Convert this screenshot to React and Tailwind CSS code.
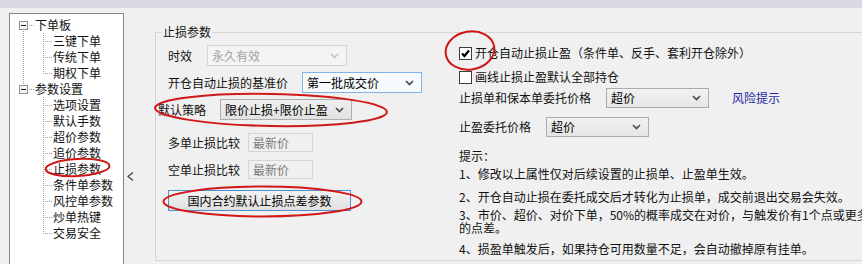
import React from 'react';

function Chevron({ color = '#4a4a4a' }) {
  return (
    <svg width="9" height="6" viewBox="0 0 9 6" className="shrink-0">
      <polyline points="1,1 4.5,4.5 8,1" fill="none" stroke={color} strokeWidth="1.7" />
    </svg>
  );
}

function Select({ text, className, textClass, chevronColor }) {
  return (
    <div className={`flex items-center justify-between pl-[4px] pr-[7px] border h-full shrink-0 ${className}`}>
      <span className={`leading-[16px] whitespace-nowrap ${textClass}`}>{text}</span>
      <Chevron color={chevronColor} />
    </div>
  );
}

const DOT = '#a0a0a0';

function TopCell({ hasPrev, hasNext }) {
  return (
    <svg width="21" height="16" className="shrink-0" shapeRendering="crispEdges">
      {hasPrev && <line x1="9.5" y1="0" x2="9.5" y2="4" stroke={DOT} strokeDasharray="1 1" />}
      {hasNext && <line x1="9.5" y1="14" x2="9.5" y2="16" stroke={DOT} strokeDasharray="1 1" />}
      <rect x="5.5" y="4.5" width="8" height="8" fill="#f4f4f4" stroke="#919191" />
      <line x1="7" y1="8.5" x2="12" y2="8.5" stroke="#222" />
      <line x1="15" y1="8.5" x2="20" y2="8.5" stroke={DOT} strokeDasharray="1 1" />
    </svg>
  );
}

function ChildCells({ parentHasNext, last }) {
  return (
    <>
      <svg width="21" height="16" className="shrink-0" shapeRendering="crispEdges">
        {parentHasNext && <line x1="9.5" y1="0" x2="9.5" y2="16" stroke={DOT} strokeDasharray="1 1" />}
      </svg>
      <svg width="18" height="16" className="shrink-0" shapeRendering="crispEdges">
        <line x1="8.5" y1="0" x2="8.5" y2={last ? 9 : 16} stroke={DOT} strokeDasharray="1 1" />
        <line x1="10" y1="8.5" x2="17" y2="8.5" stroke={DOT} strokeDasharray="1 1" />
      </svg>
    </>
  );
}

const tree = [
  { label: '下单板', children: ['三键下单', '传统下单', '期权下单'] },
  {
    label: '参数设置',
    children: ['选项设置', '默认手数', '超价参数', '追价参数', '止损参数', '条件单参数', '风控单参数', '炒单热键', '交易安全'],
  },
];

function Checkbox({ checked }) {
  return (
    <div className="w-[13px] h-[13px] border border-[#3c3c3c] bg-white shrink-0 flex items-center justify-center">
      {checked && (
        <svg width="11" height="11" viewBox="0 0 11 11">
          <path d="M2 5.5 L4.5 8 L9 2.5" fill="none" stroke="#000" strokeWidth="2.2" />
        </svg>
      )}
    </div>
  );
}

export default function App() {
  return (
    <div className="w-[862px] h-[264px] overflow-hidden bg-[#f0f0f0] relative font-['Noto_Sans_CJK_SC','Noto_Sans',sans-serif] text-[12px] text-[#111]">
      <div className="h-[8px] bg-[#d9dae5]" />
      <div className="flex">
        {/* tree */}
        <div className="ml-[9px] mt-[5px] w-[115px] h-[260px] shrink-0 border border-[#828790] bg-white pl-[4px] pt-[3px]">
          {tree.map((node, i) => (
            <React.Fragment key={node.label}>
              <div className="flex h-[16px] items-center">
                <TopCell hasPrev={i > 0} hasNext={i < tree.length - 1} />
                <span className="leading-[16px] whitespace-nowrap">{node.label}</span>
              </div>
              {node.children.map((c, j) => (
                <div key={c} className="flex h-[16px] items-center">
                  <ChildCells parentHasNext={i < tree.length - 1} last={j === node.children.length - 1} />
                  <span className="leading-[16px] whitespace-nowrap">{c}</span>
                </div>
              ))}
            </React.Fragment>
          ))}
        </div>

        {/* collapse arrow */}
        <div className="w-[31px] shrink-0 pt-[164px] pl-[3px]">
          <svg width="7" height="9" viewBox="0 0 7 9">
            <polyline points="6,0.5 1,4.5 6,8.5" fill="none" stroke="#333" strokeWidth="1.1" />
          </svg>
        </div>

        {/* group box */}
        <div className="flex-1 mt-[24px] h-[229px] border-l border-t border-b border-[#d5d5d5]">
          <div className="ml-[6px] -mt-[9px] px-[1px] w-fit bg-[#f0f0f0] leading-[16px]">止损参数</div>
          <div className="flex pl-[12px]">
            {/* left column */}
            <div className="w-[291px] shrink-0 flex flex-col">
              <div className="mt-[5px] h-[21px] flex items-center">
                <span className="w-[39px] shrink-0">时效</span>
                <Select
                  text="永久有效"
                  className="w-[140px] border-[#d4d4d4] bg-[#f4f4f4]"
                  textClass="text-[#a3a3a3]"
                  chevronColor="#c4c4c4"
                />
              </div>
              <div className="mt-[6px] h-[21px] flex items-center">
                <span className="w-[134px] shrink-0">开仓自动止损的基准价</span>
                <Select
                  text="第一批成交价"
                  className="w-[120px] border-[#7eb4ea] bg-[#f7fafd]"
                  textClass="text-black"
                  chevronColor="#4a4a4a"
                />
              </div>
              <div className="mt-[6px] h-[21px] flex items-center -ml-[10px]">
                <span className="w-[62px] shrink-0">默认策略</span>
                <Select
                  text="限价止损+限价止盈"
                  className="w-[132px] border-[#adadad] bg-gradient-to-b from-[#efefef] to-[#e2e2e2]"
                  textClass="text-black"
                  chevronColor="#4a4a4a"
                />
              </div>
              <div className="mt-[13px] h-[19px] flex items-center">
                <span className="w-[80px] shrink-0">多单止损比较</span>
                <div className="w-[65px] h-full border border-[#d5d5d5] bg-[#f0f0f0] pl-[4px] flex items-center text-[#7a7a7a]">
                  最新价
                </div>
              </div>
              <div className="mt-[8px] h-[19px] flex items-center">
                <span className="w-[80px] shrink-0">空单止损比较</span>
                <div className="w-[65px] h-full border border-[#d5d5d5] bg-[#f0f0f0] pl-[4px] flex items-center text-[#7a7a7a]">
                  最新价
                </div>
              </div>
              <div className="mt-[11px] h-[21px] w-[183px] border border-[#4f8fd0] bg-gradient-to-b from-[#f2f2f2] to-[#e0e0e0] flex items-center justify-center text-black">
                国内合约默认止损点差参数
              </div>
            </div>

            {/* right column */}
            <div className="flex flex-col">
              <div className="mt-[5px] h-[16px] flex items-center gap-[3px]">
                <Checkbox checked />
                <span className="whitespace-nowrap">开仓自动止损止盈（条件单、反手、套利开仓除外）</span>
              </div>
              <div className="mt-[8px] h-[16px] flex items-center gap-[3px]">
                <Checkbox />
                <span className="whitespace-nowrap">画线止损止盈默认全部持仓</span>
              </div>
              <div className="mt-[3px] h-[20px] flex items-center">
                <span className="w-[147px] shrink-0">止损单和保本单委托价格</span>
                <Select
                  text="超价"
                  className="w-[103px] border-[#acacac] bg-gradient-to-b from-[#f2f2f2] to-[#e6e6e6]"
                  textClass="text-black"
                  chevronColor="#4a4a4a"
                />
                <span className="ml-[23px] text-[#1f1fa8] whitespace-nowrap">风险提示</span>
              </div>
              <div className="mt-[9px] h-[20px] flex items-center">
                <span className="w-[87px] shrink-0">止盈委托价格</span>
                <Select
                  text="超价"
                  className="w-[103px] border-[#acacac] bg-gradient-to-b from-[#f2f2f2] to-[#e6e6e6]"
                  textClass="text-black"
                  chevronColor="#4a4a4a"
                />
              </div>
              <div className="mt-[11px] leading-[16px]">提示：</div>
              <div className="mt-[2px] leading-[16px] whitespace-nowrap">1、修改以上属性仅对后续设置的止损单、止盈单生效。</div>
              <div className="mt-[7px] leading-[16px] whitespace-nowrap">2、开仓自动止损在委托成交后才转化为止损单，成交前退出交易会失效。</div>
              <div className="mt-[4px] leading-[12.5px] whitespace-nowrap">
                <div>3、市价、超价、对价下单，50%的概率成交在对价，与触发价有1个点或更多</div>
                <div>的点差。</div>
              </div>
              <div className="mt-[7px] leading-[16px] whitespace-nowrap">4、损盈单触发后，如果持仓可用数量不足，会自动撤掉原有挂单。</div>
            </div>
          </div>
        </div>
      </div>

      {/* red annotation marks */}
      <svg className="absolute left-0 top-0 pointer-events-none" width="862" height="264">
        <g fill="none" stroke="#d01818" strokeWidth="2">
          <ellipse cx="77.5" cy="167.5" rx="32" ry="8.5" transform="rotate(-3 77.5 167.5)" />
          <ellipse cx="271" cy="110" rx="116" ry="16" transform="rotate(1 271 110)" />
          <ellipse cx="262.5" cy="201.5" rx="99" ry="15" />
          <ellipse cx="470" cy="50.5" rx="24.5" ry="19" transform="rotate(-10 470 50.5)" />
        </g>
      </svg>
    </div>
  );
}
